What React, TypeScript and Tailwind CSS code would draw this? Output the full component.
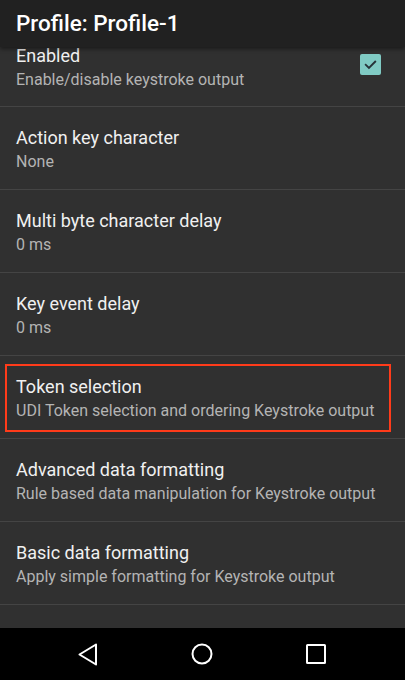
import React from "react";

const items = [
  { title: "Action key character", sub: "None" },
  { title: "Multi byte character delay", sub: "0 ms" },
  { title: "Key event delay", sub: "0 ms" },
  { title: "Token selection", sub: "UDI Token selection and ordering Keystroke output", hl: true },
  { title: "Advanced data formatting", sub: "Rule based data manipulation for Keystroke output" },
  { title: "Basic data formatting", sub: "Apply simple formatting for Keystroke output" },
];

export default function App() {
  return (
    <div className="w-[405px] h-[680px] flex flex-col bg-[#303030] overflow-hidden" style={{ fontFamily: "Roboto, 'Noto Sans', sans-serif" }}>
      <div className="relative z-10 h-[47px] shrink-0 bg-[#212121] flex items-center px-4 shadow-[0_2px_4px_rgba(0,0,0,0.45)]">
        <span className="text-white text-[22.5px] font-medium leading-none">Profile: Profile-1</span>
      </div>
      <div className="flex-1 flex flex-col">
        <div className="h-[60px] flex items-start pl-4 pr-[24px] border-b border-[#444444]">
          <div className="flex-1 -mt-[3px]">
            <div className="text-[18px] leading-[24px] text-[#f0f0f0]">Enabled</div>
            <div className="text-[16px] leading-[22px] mt-[1px] text-[#b4b4b4]">Enable/disable keystroke output</div>
          </div>
          <div className="mt-[7px] w-[21px] h-[21px] rounded-[2px] bg-[#80cbc4] flex items-center justify-center">
            <svg width="15" height="15" viewBox="0 0 24 24" fill="none" stroke="#263238" strokeWidth="3" strokeLinecap="square">
              <path d="M4.5 12.5l5 5 10-10" />
            </svg>
          </div>
        </div>
        {items.map((it) => (
          <div key={it.title} className="relative h-[83px] shrink-0 flex flex-col justify-center pt-[2px] px-4 border-b border-[#444444]">
            <div className="text-[18px] leading-[24px] text-[#f0f0f0]">{it.title}</div>
            <div className="text-[16px] leading-[22px] mt-[1px] text-[#b4b4b4]">{it.sub}</div>
            {it.hl && (
              <div className="absolute left-[5px] right-[14px] top-[8px] bottom-[6px] border-2 border-[#ff3b1a]" />
            )}
          </div>
        ))}
      </div>
      <div className="h-[52px] shrink-0 bg-black flex items-center pl-[31px]">
        <div className="w-[114px] flex justify-center">
          <svg width="20" height="23" viewBox="0 0 20 23" fill="none" stroke="white" strokeWidth="2" strokeLinejoin="round">
            <path d="M18 1.5L1.5 11.5 18 21.5z" />
          </svg>
        </div>
        <div className="w-[114px] flex justify-center">
          <svg width="22" height="22" viewBox="0 0 22 22" fill="none" stroke="white" strokeWidth="2">
            <circle cx="11" cy="11" r="9.5" />
          </svg>
        </div>
        <div className="w-[114px] flex justify-center">
          <svg width="20" height="20" viewBox="0 0 20 20" fill="none" stroke="white" strokeWidth="2">
            <rect x="1" y="1" width="18" height="18" rx="0.5" />
          </svg>
        </div>
      </div>
    </div>
  );
}
